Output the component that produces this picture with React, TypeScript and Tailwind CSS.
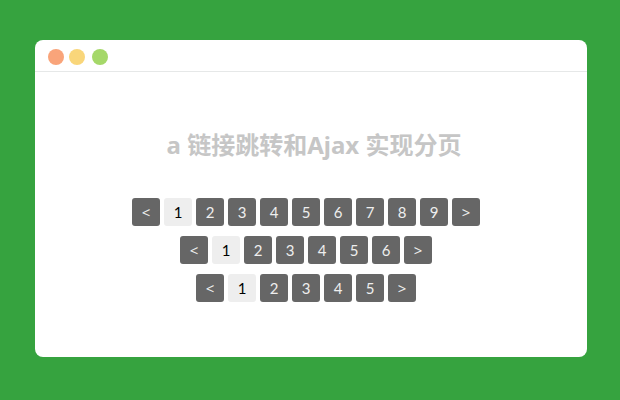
const rows: number[] = [9, 6, 5];

function PageLink({ label, name, active }: { label: string; name: string; active?: boolean }) {
  return (
    <a
      href="#"
      aria-label={name}
      aria-current={active ? "page" : undefined}
      className={
        active
          ? "flex h-7 w-7 items-center justify-center rounded-[3px] bg-[#eeeeee] text-black"
          : "flex h-7 w-7 items-center justify-center rounded-[3px] bg-[#666666] text-[#eeeeee]"
      }
    >
      {label}
    </a>
  );
}

function ArrowLink({ label, name }: { label: string; name: string }) {
  return (
    <a
      href="#"
      aria-label={name}
      className="flex h-7 w-7 items-center justify-center rounded-[3px] bg-[#666666] font-['Noto_Sans',sans-serif] text-[#eeeeee]"
    >
      {label}
    </a>
  );
}

function Pagination({ count }: { count: number }) {
  const pages = Array.from({ length: count }, (_, i) => i + 1);
  return (
    <nav
      aria-label={`Pagination, ${count} pages`}
      className="flex justify-center gap-1 font-['Lato','Noto_Sans',sans-serif] text-[15px] leading-7"
    >
      <ArrowLink label="<" name="Previous page" />
      {pages.map((page) => (
        <PageLink key={page} label={String(page)} name={`Page ${page}`} active={page === 1} />
      ))}
      <ArrowLink label=">" name="Next page" />
    </nav>
  );
}

export default function App() {
  return (
    <div className="min-h-screen bg-[#36a33f] pt-10 pr-[33px] pb-[43px] pl-[35px] font-['Noto_Sans','Noto_Sans_CJK_SC',sans-serif]">
      <main className="rounded-lg bg-white pb-[55px]">
        <header className="flex h-8 items-start border-b border-[#e6e8e8] pt-[9px] pl-[13px]">
          <span className="h-4 w-4 rounded-full bg-[#f9a47a]" />
          <span className="ml-[5px] h-4 w-4 rounded-full bg-[#f9d67a]" />
          <span className="ml-[7px] h-4 w-4 rounded-full bg-[#a5d869]" />
        </header>
        <h1 className="pt-[55px] pl-1.5 text-center text-2xl leading-9 font-bold text-[#c6c6c6]">
          a 链接跳转和Ajax 实现分页
        </h1>
        <div className="mt-[35px] flex flex-col gap-2.5 pr-2.5">
          {rows.map((count) => (
            <Pagination key={count} count={count} />
          ))}
        </div>
      </main>
    </div>
  );
}
